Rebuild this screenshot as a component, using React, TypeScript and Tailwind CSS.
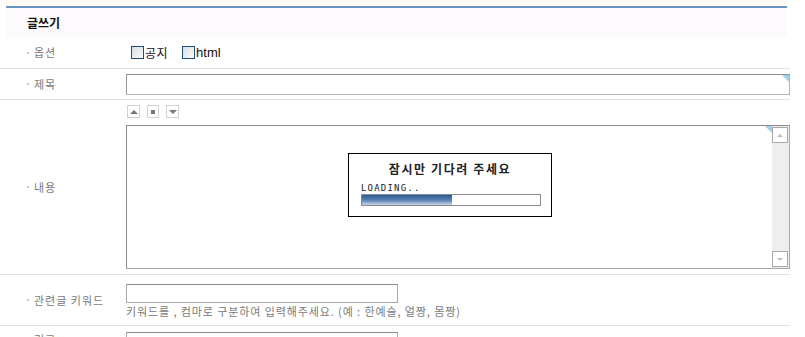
import React from "react";

const font = { fontFamily: '"Noto Sans CJK KR", "Noto Sans", sans-serif' };

function Label({ text }: { text: string }) {
  return (
    <div className="w-[126px] shrink-0 flex items-center pl-[27px] text-[11px] tracking-[1px] text-[#7a7a7a]">
      <span className="w-[2px] h-[2px] bg-[#c4c4c4] mr-[5px]" />
      <span>{text}</span>
    </div>
  );
}

function Corner() {
  return (
    <div className="absolute right-0 top-0 w-0 h-0 border-t-[7px] border-l-[7px] border-t-[#9fd0ec] border-l-transparent" />
  );
}

function Checkbox() {
  return (
    <span className="inline-block w-[13px] h-[13px] border border-[#1f4e78] bg-gradient-to-br from-[#d8dde3] to-[#fbfbfb]" />
  );
}

export default function App() {
  return (
    <div className="w-[805px] h-[337px] bg-white overflow-hidden" style={font}>
      <div className="ml-[6px] w-[781px] h-[6px] bg-[#fffcf5]" />
      <div className="ml-[6px] w-[781px] h-[31px] border-t-2 border-[#6b96bb] bg-[#fdfafd] flex items-center pl-[21px]">
        <span className="text-[12px] font-bold text-[#111]">글쓰기</span>
      </div>

      {/* 옵션 */}
      <div className="w-[790px] h-[32px] flex border-b border-[#e2e2e2]">
        <Label text="옵션" />
        <div className="flex items-center pl-[5px] text-[12px] text-[#111]">
          <Checkbox />
          <span className="ml-[1px] mr-[14px] tracking-[0.5px]">공지</span>
          <Checkbox />
          <span className="ml-[1px]" style={{ fontFamily: '"Liberation Sans", Arial, sans-serif', fontSize: 13 }}>html</span>
        </div>
      </div>

      {/* 제목 */}
      <div className="w-[790px] h-[31px] flex border-b border-[#e2e2e2]">
        <Label text="제목" />
        <div className="flex-1 flex items-center">
          <div className="relative w-full h-[21px] border border-[#b5b5b5] border-t-[#8f8f8f] border-l-[#9a9a9a]">
            <Corner />
          </div>
        </div>
      </div>

      {/* 내용 */}
      <div className="w-[790px] h-[175px] flex border-b border-[#e2e2e2]">
        <Label text="내용" />
        <div className="flex-1 flex flex-col pt-[5px]">
          <div className="flex gap-[7px] pl-[1px] h-[13px]">
            <div className="w-[13px] h-[13px] border border-[#d2d2d2] flex items-center justify-center">
              <div className="w-0 h-0 border-l-[4px] border-r-[4px] border-b-[4px] border-l-transparent border-r-transparent border-b-[#777]" />
            </div>
            <div className="w-[12px] h-[13px] border border-[#d2d2d2] flex items-center justify-center">
              <div className="w-[4px] h-[4px] bg-[#777]" />
            </div>
            <div className="w-[13px] h-[13px] border border-[#d2d2d2] flex items-center justify-center">
              <div className="w-0 h-0 border-l-[4px] border-r-[4px] border-t-[4px] border-l-transparent border-r-transparent border-t-[#777]" />
            </div>
          </div>
          <div className="relative mt-[7px] h-[144px] border border-[#aaa] border-t-[#8c8c8c] border-l-[#8c8c8c] flex">
            <div className="relative flex-1">
              <Corner />
              <div className="absolute left-[221px] top-[27px] w-[204px] h-[64px] border border-black bg-white flex flex-col items-center">
                <div className="mt-[6px] text-[12px] font-bold text-[#222] tracking-[1.6px]">잠시만 기다려 주세요</div>
                <div className="self-start ml-[12px] mt-[6px] text-[9px] leading-[9px] tracking-[1.2px] text-[#222]" style={{ fontFamily: '"DejaVu Sans Mono", monospace' }}>LOADING..</div>
                <div className="self-start ml-[12px] mt-[1px] w-[180px] h-[12px] border border-[#8a8a8a] bg-white">
                  <div className="h-full w-[90px] bg-gradient-to-b from-[#2c5c94] via-[#5680b0] to-[#c8d7ea]" />
                </div>
              </div>
            </div>
            <div className="w-[17px] bg-[#eeeeee] flex flex-col justify-between py-[1px]">
              <div className="w-[16px] h-[16px] border border-[#a9a9a9] bg-white flex items-center justify-center">
                <div className="w-0 h-0 border-l-[3px] border-r-[3px] border-b-[3px] border-l-transparent border-r-transparent border-b-[#bbb]" />
              </div>
              <div className="w-[16px] h-[16px] border border-[#a9a9a9] bg-white flex items-center justify-center">
                <div className="w-0 h-0 border-l-[3px] border-r-[3px] border-t-[3px] border-l-transparent border-r-transparent border-t-[#bbb]" />
              </div>
            </div>
          </div>
        </div>
      </div>

      {/* 관련글 키워드 */}
      <div className="w-[790px] h-[51px] flex border-b border-[#e2e2e2]">
        <Label text="관련글 키워드" />
        <div className="flex flex-col pt-[9px]">
          <div className="w-[272px] h-[19px] border border-[#aaa] border-t-[#8c8c8c]" />
          <div className="mt-[1px] text-[11px] leading-[14px] tracking-[0.9px] text-[#7a7a7a] whitespace-nowrap">키워드를 , 컴마로 구분하여 입력해주세요. (예 : 한예슬, 얼짱, 몸짱)</div>
        </div>
      </div>

      {/* next row */}
      <div className="w-[790px] h-[20px] flex">
        <div className="w-[126px] shrink-0 flex items-start pt-[5px] pl-[27px] text-[11px] tracking-[1px] text-[#7a7a7a]">
          <span className="w-[2px] h-[2px] bg-[#c4c4c4] mr-[5px] mt-[6px]" />
          <span>링크</span>
        </div>
        <div className="pt-[6px]">
          <div className="w-[272px] h-[19px] border border-[#aaa] border-t-[#8c8c8c]" />
        </div>
      </div>
    </div>
  );
}
